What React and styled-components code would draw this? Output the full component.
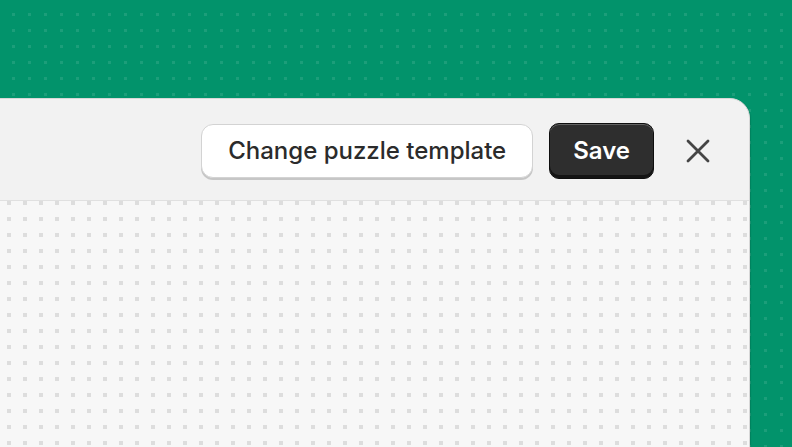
import React from "react";
import styled, { createGlobalStyle } from "styled-components";

const GlobalStyle = createGlobalStyle`
  html, body {
    margin: 0;
    padding: 0;
    height: 100%;
    overflow: hidden;
  }
  body {
    font-family: Inter, "Noto Sans", sans-serif;
    background-color: #02936b;
    background-image: conic-gradient(from 270deg at 3px 3px, rgba(255, 255, 255, 0.1) 0 90deg, transparent 90deg);
    background-size: 16px 16px;
    background-position: 12px 13px;
  }
`;

const Page = styled.div`
  height: 447px;
  padding-top: 98px;
  box-sizing: border-box;
  overflow: hidden;
`;

const Editor = styled.div`
  margin-left: -40px;
  margin-right: 42px;
  height: 400px;
  display: flex;
  flex-direction: column;
  background: #f2f2f2;
  border: 1px solid #d8d8d8;
  border-radius: 0 20px 0 0;
  box-shadow: 1px 1px 1px rgba(0, 0, 0, 0.12);
  overflow: hidden;
`;

const Header = styled.header`
  height: 102px;
  flex-shrink: 0;
  display: flex;
  align-items: center;
  justify-content: flex-end;
  gap: 16px;
  padding-right: 31px;
  padding-top: 2px;
  box-sizing: border-box;
  border-bottom: 1px solid #e0e0e0;
`;

const Canvas = styled.div`
  flex: 1;
  background-color: #f7f7f7;
  background-image: conic-gradient(from 270deg at 4px 4px, #dddddd 0 90deg, transparent 90deg);
  background-size: 16px 16px;
  background-position: 14px 0;
`;

const Button = styled.button`
  font-family: Inter, "Noto Sans", sans-serif;
  font-size: 24px;
  line-height: 1;
  cursor: pointer;
  box-sizing: border-box;
  padding: ${(p) => (p.$primary ? "0 23px" : "0 26px")};
  height: ${(p) => (p.$primary ? "56px" : "54px")};
  border-radius: ${(p) => (p.$primary ? "10px" : "12px")};
  font-weight: ${(p) => (p.$primary ? 600 : 500)};
  color: ${(p) => (p.$primary ? "#ffffff" : "#2b2b2b")};
  background: ${(p) => (p.$primary ? "#2e2e2e" : "#ffffff")};
  border: 1px solid ${(p) => (p.$primary ? "#0e0e0e" : "#d3d3d3")};
  box-shadow: ${(p) =>
    p.$primary
      ? "inset 0 1px 0 rgba(255,255,255,0.25), inset 0 -3px 0 rgba(0,0,0,0.55)"
      : "0 2px 0 #c6c6c6"};
`;

const CloseButton = styled.button`
  width: 40px;
  height: 40px;
  margin-left: 8px;
  padding: 0;
  border: none;
  background: transparent;
  display: flex;
  align-items: center;
  justify-content: center;
  color: #454545;
  cursor: pointer;
`;

function CloseIcon() {
  return (
    <svg width="24" height="24" viewBox="0 0 24 24" fill="none">
      <path d="M2 2L22 22M22 2L2 22" stroke="currentColor" strokeWidth="2.8" strokeLinecap="round" />
    </svg>
  );
}

export default function App() {
  return (
    <>
      <GlobalStyle />
      <Page>
        <Editor>
          <Header>
            <Button>Change puzzle template</Button>
            <Button $primary>Save</Button>
            <CloseButton aria-label="Close">
              <CloseIcon />
            </CloseButton>
          </Header>
          <Canvas />
        </Editor>
      </Page>
    </>
  );
}
